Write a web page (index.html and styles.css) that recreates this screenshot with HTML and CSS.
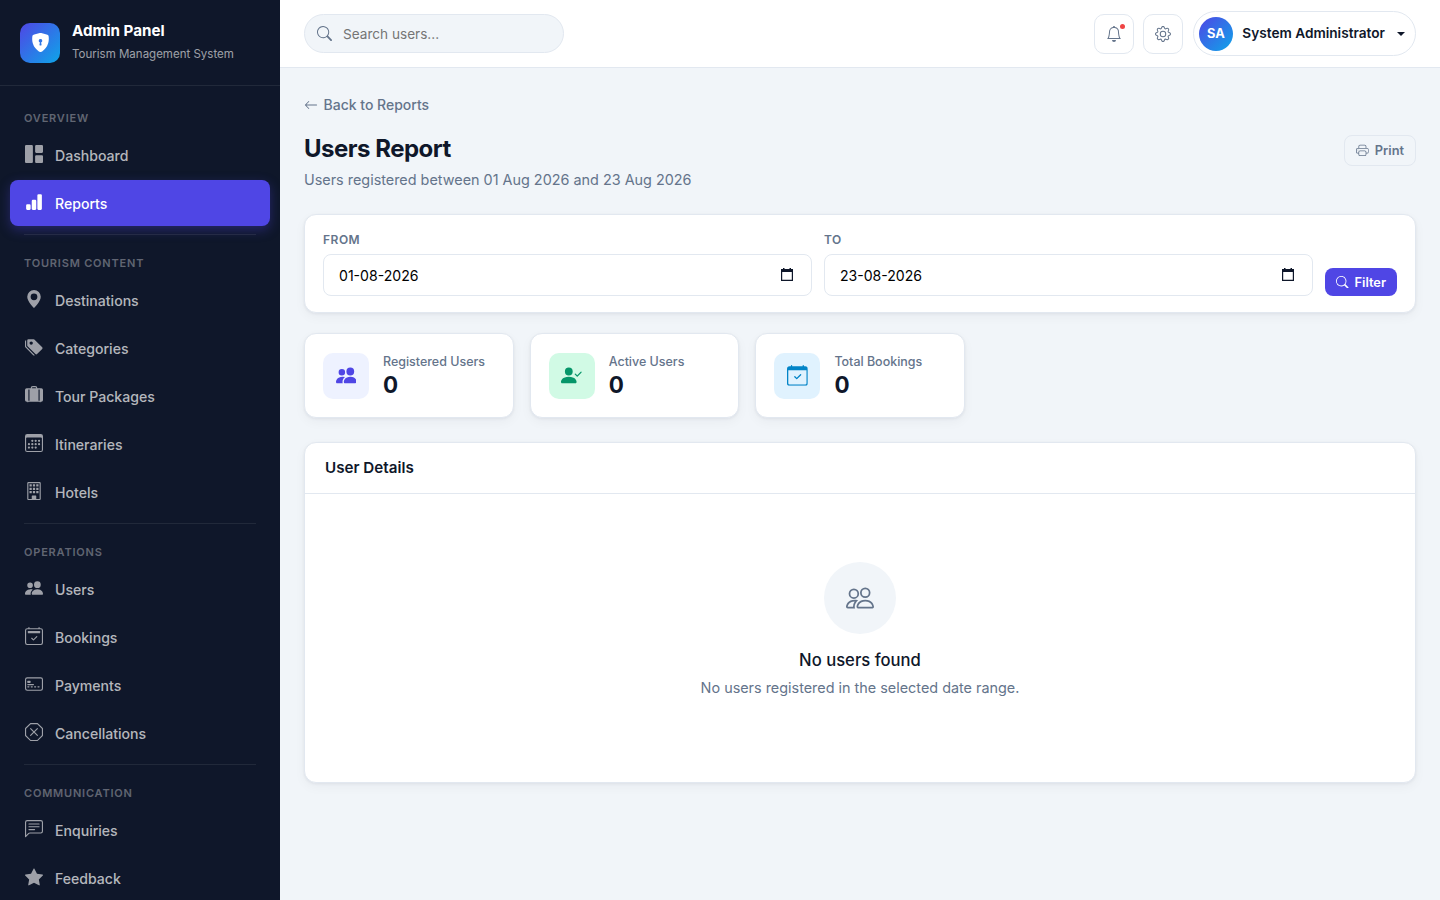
FILE: index.html
```
<!DOCTYPE html>
<html lang="en">
<head>
<meta charset="utf-8">
<title>Users Report</title>
<link rel="stylesheet" href="styles.css">
</head>
<body>

<!-- icon sprite -->
<svg class="sprite" xmlns="http://www.w3.org/2000/svg">
	<symbol id="shield" viewBox="0 0 16 16"><path fill-rule="evenodd" d="M8 0c-.69 0-1.843.265-2.928.56-1.11.3-2.229.655-2.887.87a1.54 1.54 0 0 0-1.044 1.262c-.596 4.477.787 7.795 2.465 9.99a11.8 11.8 0 0 0 2.517 2.453c.386.273.744.482 1.048.625.28.132.581.24.829.24s.548-.108.829-.24a7 7 0 0 0 1.048-.625 11.8 11.8 0 0 0 2.517-2.453c1.678-2.195 3.061-5.513 2.465-9.99a1.54 1.54 0 0 0-1.044-1.263 63 63 0 0 0-2.887-.87C9.843.266 8.69 0 8 0m0 5a1.5 1.5 0 0 1 .5 2.915l.385 1.99a.5.5 0 0 1-.491.595h-.788a.5.5 0 0 1-.49-.595l.384-1.99A1.5 1.5 0 0 1 8 5"/></symbol>
	<symbol id="grid" viewBox="0 0 16 16"><path d="M0 1a1 1 0 0 1 1-1h5a1 1 0 0 1 1 1v14a1 1 0 0 1-1 1H1a1 1 0 0 1-1-1zm9 0a1 1 0 0 1 1-1h5a1 1 0 0 1 1 1v5a1 1 0 0 1-1 1h-5a1 1 0 0 1-1-1zm0 9a1 1 0 0 1 1-1h5a1 1 0 0 1 1 1v5a1 1 0 0 1-1 1h-5a1 1 0 0 1-1-1z"/></symbol>
	<symbol id="chart" viewBox="0 0 16 16"><path d="M1 11a1 1 0 0 1 1-1h2a1 1 0 0 1 1 1v3a1 1 0 0 1-1 1H2a1 1 0 0 1-1-1zm5-4a1 1 0 0 1 1-1h2a1 1 0 0 1 1 1v7a1 1 0 0 1-1 1H7a1 1 0 0 1-1-1zm5-5a1 1 0 0 1 1-1h2a1 1 0 0 1 1 1v12a1 1 0 0 1-1 1h-2a1 1 0 0 1-1-1z"/></symbol>
	<symbol id="geo" viewBox="0 0 16 16"><path d="M8 16s6-5.686 6-10A6 6 0 0 0 2 6c0 4.314 6 10 6 10m0-7a3 3 0 1 1 0-6 3 3 0 0 1 0 6"/></symbol>
	<symbol id="tags" viewBox="0 0 16 16"><path d="M2 2a1 1 0 0 1 1-1h4.586a1 1 0 0 1 .707.293l7 7a1 1 0 0 1 0 1.414l-4.586 4.586a1 1 0 0 1-1.414 0l-7-7A1 1 0 0 1 2 6.586zm3.5 4a1.5 1.5 0 1 0 0-3 1.5 1.5 0 0 0 0 3"/><path d="M1.293 7.793A1 1 0 0 1 1 7.086V2a1 1 0 0 0-1 1v4.586a1 1 0 0 0 .293.707l7 7a1 1 0 0 0 1.414 0l.043-.043z"/></symbol>
	<symbol id="suitcase" viewBox="0 0 16 16"><path d="M7 0a2 2 0 0 0-2 2H1.5A1.5 1.5 0 0 0 0 3.5v9A1.5 1.5 0 0 0 1.5 14H2a.5.5 0 0 0 1 0h10a.5.5 0 0 0 1 0h.5a1.5 1.5 0 0 0 1.5-1.5v-9A1.5 1.5 0 0 0 14.5 2H11a2 2 0 0 0-2-2zM6 2a1 1 0 0 1 1-1h2a1 1 0 0 1 1 1zM3 13V3h1v10zm9 0V3h1v10z"/></symbol>
	<symbol id="calendar3" viewBox="0 0 16 16"><path d="M14 0H2a2 2 0 0 0-2 2v12a2 2 0 0 0 2 2h12a2 2 0 0 0 2-2V2a2 2 0 0 0-2-2M1 3.857C1 3.384 1.448 3 2 3h12c.552 0 1 .384 1 .857v10.286c0 .473-.448.857-1 .857H2c-.552 0-1-.384-1-.857z"/><path d="M6.5 7a1 1 0 1 0 0-2 1 1 0 0 0 0 2m3 0a1 1 0 1 0 0-2 1 1 0 0 0 0 2m3 0a1 1 0 1 0 0-2 1 1 0 0 0 0 2m-9 3a1 1 0 1 0 0-2 1 1 0 0 0 0 2m3 0a1 1 0 1 0 0-2 1 1 0 0 0 0 2m3 0a1 1 0 1 0 0-2 1 1 0 0 0 0 2m3 0a1 1 0 1 0 0-2 1 1 0 0 0 0 2m-9 3a1 1 0 1 0 0-2 1 1 0 0 0 0 2m3 0a1 1 0 1 0 0-2 1 1 0 0 0 0 2m3 0a1 1 0 1 0 0-2 1 1 0 0 0 0 2"/></symbol>
	<symbol id="building" viewBox="0 0 16 16"><path d="M4 2h2v2H4zM7 2h2v2H7zM10 2h2v2h-2zM4 5h2v2H4zM7 5h2v2H7zM10 5h2v2h-2zM4 8h2v2H4zM7 8h2v2H7zM10 8h2v2h-2z"/><path d="M2 1a1 1 0 0 1 1-1h10a1 1 0 0 1 1 1v14a1 1 0 0 1-1 1H3a1 1 0 0 1-1-1zm11 0H3v14h3v-2.5a.5.5 0 0 1 .5-.5h3a.5.5 0 0 1 .5.5V15h3z"/></symbol>
	<symbol id="people-fill" viewBox="0 0 16 16"><path d="M7 14s-1 0-1-1 1-4 5-4 5 3 5 4-1 1-1 1zm4-6a3 3 0 1 0 0-6 3 3 0 0 0 0 6m-5.784 6A2.24 2.24 0 0 1 5 13c0-1.355.68-2.75 1.936-3.72A6.3 6.3 0 0 0 5 9c-4 0-5 3-5 4s1 1 1 1zM4.5 8a2.5 2.5 0 1 0 0-5 2.5 2.5 0 0 0 0 5"/></symbol>
	<symbol id="calendar2" viewBox="0 0 16 16"><path d="M10.854 8.146a.5.5 0 0 1 0 .708l-3 3a.5.5 0 0 1-.708 0l-1.5-1.5a.5.5 0 0 1 .708-.708L7.5 10.793l2.646-2.647a.5.5 0 0 1 .708 0"/><path d="M3.5 0a.5.5 0 0 1 .5.5V1h8V.5a.5.5 0 0 1 1 0V1h1a2 2 0 0 1 2 2v11a2 2 0 0 1-2 2H2a2 2 0 0 1-2-2V3a2 2 0 0 1 2-2h1V.5a.5.5 0 0 1 .5-.5M2 2a1 1 0 0 0-1 1v11a1 1 0 0 0 1 1h12a1 1 0 0 0 1-1V3a1 1 0 0 0-1-1z"/><path d="M2.5 4a.5.5 0 0 1 .5-.5h10a.5.5 0 0 1 .5.5v1a.5.5 0 0 1-.5.5H3a.5.5 0 0 1-.5-.5z"/></symbol>
	<symbol id="card" viewBox="0 0 16 16"><path d="M14 3a1 1 0 0 1 1 1v8a1 1 0 0 1-1 1H2a1 1 0 0 1-1-1V4a1 1 0 0 1 1-1zM2 2a2 2 0 0 0-2 2v8a2 2 0 0 0 2 2h12a2 2 0 0 0 2-2V4a2 2 0 0 0-2-2z"/><path d="M2 5.5a.5.5 0 0 1 .5-.5h2a.5.5 0 0 1 .5.5v1a.5.5 0 0 1-.5.5h-2a.5.5 0 0 1-.5-.5zm0 3a.5.5 0 0 1 .5-.5h5a.5.5 0 0 1 0 1h-5a.5.5 0 0 1-.5-.5m0 2a.5.5 0 0 1 .5-.5h1a.5.5 0 0 1 0 1h-1a.5.5 0 0 1-.5-.5m3 0a.5.5 0 0 1 .5-.5h1a.5.5 0 0 1 0 1h-1a.5.5 0 0 1-.5-.5m3 0a.5.5 0 0 1 .5-.5h1a.5.5 0 0 1 0 1h-1a.5.5 0 0 1-.5-.5m3 0a.5.5 0 0 1 .5-.5h1a.5.5 0 0 1 0 1h-1a.5.5 0 0 1-.5-.5"/></symbol>
	<symbol id="octagon" viewBox="0 0 16 16"><path d="M4.54.146A.5.5 0 0 1 4.893 0h6.214a.5.5 0 0 1 .353.146l4.394 4.394a.5.5 0 0 1 .146.353v6.214a.5.5 0 0 1-.146.353l-4.394 4.394a.5.5 0 0 1-.353.146H4.893a.5.5 0 0 1-.353-.146L.146 11.46A.5.5 0 0 1 0 11.107V4.893a.5.5 0 0 1 .146-.353zM5.1 1 1 5.1v5.8L5.1 15h5.8l4.1-4.1V5.1L10.9 1z"/><path d="M4.646 4.646a.5.5 0 0 1 .708 0L8 7.293l2.646-2.647a.5.5 0 0 1 .708.708L8.707 8l2.647 2.646a.5.5 0 0 1-.708.708L8 8.707l-2.646 2.647a.5.5 0 0 1-.708-.708L7.293 8 4.646 5.354a.5.5 0 0 1 0-.708"/></symbol>
	<symbol id="chat" viewBox="0 0 16 16"><path d="M14 1a1 1 0 0 1 1 1v8a1 1 0 0 1-1 1H4.414A2 2 0 0 0 3 11.586l-2 2V2a1 1 0 0 1 1-1zM2 0a2 2 0 0 0-2 2v12.793a.5.5 0 0 0 .854.353l2.853-2.853A1 1 0 0 1 4.414 12H14a2 2 0 0 0 2-2V2a2 2 0 0 0-2-2z"/><path d="M3 3.5a.5.5 0 0 1 .5-.5h9a.5.5 0 0 1 0 1h-9a.5.5 0 0 1-.5-.5M3 6a.5.5 0 0 1 .5-.5h9a.5.5 0 0 1 0 1h-9A.5.5 0 0 1 3 6m0 2.5a.5.5 0 0 1 .5-.5h5a.5.5 0 0 1 0 1h-5a.5.5 0 0 1-.5-.5"/></symbol>
	<symbol id="star" viewBox="0 0 16 16"><path d="M3.612 15.443c-.386.198-.824-.149-.746-.592l.83-4.73L.173 6.765c-.329-.314-.158-.888.283-.95l4.898-.696L7.538.792c.197-.39.73-.39.927 0l2.184 4.327 4.898.696c.441.062.612.636.282.95l-3.522 3.356.83 4.73c.078.443-.36.79-.746.592L8 13.187l-4.389 2.256z"/></symbol>
	<symbol id="search" viewBox="0 0 16 16"><path d="M11.742 10.344a6.5 6.5 0 1 0-1.397 1.398h-.001q.044.06.098.115l3.85 3.85a1 1 0 0 0 1.415-1.414l-3.85-3.85a1 1 0 0 0-.115-.1zM12 6.5a5.5 5.5 0 1 1-11 0 5.5 5.5 0 0 1 11 0"/></symbol>
	<symbol id="bell" viewBox="0 0 16 16"><path d="M8 16a2 2 0 0 0 2-2H6a2 2 0 0 0 2 2M8 1.918l-.797.161A4 4 0 0 0 4 6c0 .628-.134 2.197-.459 3.742-.16.767-.376 1.566-.663 2.258h10.244c-.287-.692-.502-1.49-.663-2.258C12.134 8.197 12 6.628 12 6a4 4 0 0 0-3.203-3.92zM14.22 12c.223.447.481.801.78 1H1c.299-.199.557-.553.78-1C2.68 10.2 3 6.88 3 6c0-2.42 1.72-4.44 4.005-4.901a1 1 0 1 1 1.99 0A5 5 0 0 1 13 6c0 .88.32 4.2 1.22 6"/></symbol>
	<symbol id="gear" viewBox="0 0 16 16"><path d="M8 4.754a3.246 3.246 0 1 0 0 6.492 3.246 3.246 0 0 0 0-6.492M5.754 8a2.246 2.246 0 1 1 4.492 0 2.246 2.246 0 0 1-4.492 0"/><path d="M9.796 1.343c-.527-1.79-3.065-1.79-3.592 0l-.094.319a.873.873 0 0 1-1.255.52l-.292-.16c-1.64-.892-3.433.902-2.54 2.541l.159.292a.873.873 0 0 1-.52 1.255l-.319.094c-1.79.527-1.79 3.065 0 3.592l.319.094a.873.873 0 0 1 .52 1.255l-.16.292c-.892 1.64.901 3.434 2.541 2.54l.292-.159a.873.873 0 0 1 1.255.52l.094.319c.527 1.79 3.065 1.79 3.592 0l.094-.319a.873.873 0 0 1 1.255-.52l.292.16c1.64.893 3.434-.902 2.54-2.541l-.159-.292a.873.873 0 0 1 .52-1.255l.319-.094c1.79-.527 1.79-3.065 0-3.592l-.319-.094a.873.873 0 0 1-.52-1.255l.16-.292c.893-1.64-.902-3.433-2.541-2.54l-.292.159a.873.873 0 0 1-1.255-.52zm-2.633.283c.246-.835 1.428-.835 1.674 0l.094.319a1.873 1.873 0 0 0 2.693 1.115l.291-.16c.764-.415 1.6.42 1.184 1.185l-.159.292a1.873 1.873 0 0 0 1.116 2.692l.318.094c.835.246.835 1.428 0 1.674l-.319.094a1.873 1.873 0 0 0-1.115 2.693l.16.291c.415.764-.42 1.6-1.185 1.184l-.291-.159a1.873 1.873 0 0 0-2.693 1.116l-.094.318c-.246.835-1.428.835-1.674 0l-.094-.319a1.873 1.873 0 0 0-2.692-1.115l-.292.16c-.764.415-1.6-.42-1.184-1.185l.159-.291A1.873 1.873 0 0 0 1.945 8.93l-.319-.094c-.835-.246-.835-1.428 0-1.674l.319-.094A1.873 1.873 0 0 0 3.06 4.377l-.16-.292c-.415-.764.42-1.6 1.185-1.184l.292.159a1.873 1.873 0 0 0 2.692-1.115z"/></symbol>
	<symbol id="arrow" viewBox="0 0 16 16"><path d="M15 8a.5.5 0 0 0-.5-.5H2.707l3.147-3.146a.5.5 0 1 0-.708-.708l-4 4a.5.5 0 0 0 0 .708l4 4a.5.5 0 0 0 .708-.708L2.707 8.5H14.5A.5.5 0 0 0 15 8"/></symbol>
	<symbol id="printer" viewBox="0 0 16 16"><path d="M2.5 8a.5.5 0 1 0 0-1 .5.5 0 0 0 0 1"/><path d="M5 1a2 2 0 0 0-2 2v2H2a2 2 0 0 0-2 2v3a2 2 0 0 0 2 2h1v1a2 2 0 0 0 2 2h6a2 2 0 0 0 2-2v-1h1a2 2 0 0 0 2-2V7a2 2 0 0 0-2-2h-1V3a2 2 0 0 0-2-2zM4 3a1 1 0 0 1 1-1h6a1 1 0 0 1 1 1v2H4zm1 5a2 2 0 0 0-2 2v1H2a1 1 0 0 1-1-1V7a1 1 0 0 1 1-1h12a1 1 0 0 1 1 1v3a1 1 0 0 1-1 1h-1v-1a2 2 0 0 0-2-2zm7 2v3a1 1 0 0 1-1 1H5a1 1 0 0 1-1-1v-3a1 1 0 0 1 1-1h6a1 1 0 0 1 1 1"/></symbol>
	<symbol id="people" viewBox="0 0 16 16"><path d="M15 14s1 0 1-1-1-4-5-4-5 3-5 4 1 1 1 1zm-7.978-1L7 12.996c.001-.264.167-1.03.76-1.72C8.312 10.629 9.282 10 11 10c1.717 0 2.687.63 3.24 1.276.593.69.758 1.457.76 1.72l-.008.002-.014.002zM11 7a2 2 0 1 0 0-4 2 2 0 0 0 0 4m3-2a3 3 0 1 1-6 0 3 3 0 0 1 6 0M6.936 9.28a6 6 0 0 0-1.23-.247A7 7 0 0 0 5 9c-4 0-5 3-5 4q0 1 1 1h4.216A2.24 2.24 0 0 1 5 13c0-1.01.377-2.042 1.09-2.904.243-.294.526-.569.846-.816M4.92 10A5.5 5.5 0 0 0 4 13H1c0-.26.164-1.03.76-1.724.545-.636 1.492-1.256 3.16-1.275zM1.5 5.5a3 3 0 1 1 6 0 3 3 0 0 1-6 0m3-2a2 2 0 1 0 0 4 2 2 0 0 0 0-4"/></symbol>
	<symbol id="person-check" viewBox="0 0 16 16"><path d="M15.854 5.146a.5.5 0 0 1 0 .708l-3 3a.5.5 0 0 1-.708 0l-1.5-1.5a.5.5 0 0 1 .708-.708L12.5 7.793l2.646-2.647a.5.5 0 0 1 .708 0"/><path d="M1 14s-1 0-1-1 1-4 6-4 6 3 6 4-1 1-1 1zm5-6a3 3 0 1 0 0-6 3 3 0 0 0 0 6"/></symbol>
	<symbol id="calendar-check" viewBox="0 0 16 16"><path d="M10.854 7.146a.5.5 0 0 1 0 .708l-3 3a.5.5 0 0 1-.708 0l-1.5-1.5a.5.5 0 1 1 .708-.708L7.5 9.793l2.646-2.647a.5.5 0 0 1 .708 0"/><path d="M3.5 0a.5.5 0 0 1 .5.5V1h8V.5a.5.5 0 0 1 1 0V1h1a2 2 0 0 1 2 2v11a2 2 0 0 1-2 2H2a2 2 0 0 1-2-2V3a2 2 0 0 1 2-2h1V.5a.5.5 0 0 1 .5-.5M1 4v10a1 1 0 0 0 1 1h12a1 1 0 0 0 1-1V4z"/></symbol>
	<symbol id="picker" viewBox="0 0 12 13"><path fill-rule="evenodd" d="M2 0h1.5v1h5V0H10v1h2v12H0V1h2zM1.2 4v7.8h9.6V4z"/></symbol>
</svg>

<aside class="sidebar">
	<div class="brand">
		<div class="brand-icon"><svg class="icon"><use href="#shield"/></svg></div>
		<div class="brand-text">
			<div class="brand-name">Admin Panel</div>
			<div class="brand-sub">Tourism Management System</div>
		</div>
	</div>
	<nav class="menu">
		<div class="menu-title">Overview</div>
		<a class="menu-link"><svg class="icon"><use href="#grid"/></svg>Dashboard</a>
		<a class="menu-link active"><svg class="icon"><use href="#chart"/></svg>Reports</a>
		<hr class="menu-divider">
		<div class="menu-title">Tourism Content</div>
		<a class="menu-link"><svg class="icon"><use href="#geo"/></svg>Destinations</a>
		<a class="menu-link"><svg class="icon"><use href="#tags"/></svg>Categories</a>
		<a class="menu-link"><svg class="icon"><use href="#suitcase"/></svg>Tour Packages</a>
		<a class="menu-link"><svg class="icon"><use href="#calendar3"/></svg>Itineraries</a>
		<a class="menu-link"><svg class="icon"><use href="#building"/></svg>Hotels</a>
		<hr class="menu-divider">
		<div class="menu-title">Operations</div>
		<a class="menu-link"><svg class="icon"><use href="#people-fill"/></svg>Users</a>
		<a class="menu-link"><svg class="icon"><use href="#calendar2"/></svg>Bookings</a>
		<a class="menu-link"><svg class="icon"><use href="#card"/></svg>Payments</a>
		<a class="menu-link"><svg class="icon"><use href="#octagon"/></svg>Cancellations</a>
		<hr class="menu-divider">
		<div class="menu-title">Communication</div>
		<a class="menu-link"><svg class="icon"><use href="#chat"/></svg>Enquiries</a>
		<a class="menu-link"><svg class="icon"><use href="#star"/></svg>Feedback</a>
	</nav>
</aside>

<div class="main">
	<header class="topbar">
		<label class="search">
			<svg class="icon"><use href="#search"/></svg>
			<input type="text" placeholder="Search users...">
		</label>
		<div class="topbar-right">
			<button class="icon-btn"><svg class="icon"><use href="#bell"/></svg><span class="dot"></span></button>
			<button class="icon-btn"><svg class="icon"><use href="#gear"/></svg></button>
			<button class="profile">
				<span class="avatar">SA</span>
				<span class="profile-name">System Administrator</span>
				<span class="caret"></span>
			</button>
		</div>
	</header>

	<main class="content">
		<a class="back"><svg class="icon"><use href="#arrow"/></svg>Back to Reports</a>
		<div class="page-head">
			<div>
				<h1>Users Report</h1>
				<p>Users registered between 01 Aug 2026 and 23 Aug 2026</p>
			</div>
			<button class="btn btn-light"><svg class="icon"><use href="#printer"/></svg>Print</button>
		</div>

		<form class="card filter">
			<div class="field">
				<label for="from">From</label>
				<div class="date"><input id="from" type="text" value="01-08-2026"><svg class="icon"><use href="#picker"/></svg></div>
			</div>
			<div class="field">
				<label for="to">To</label>
				<div class="date"><input id="to" type="text" value="23-08-2026"><svg class="icon"><use href="#picker"/></svg></div>
			</div>
			<button type="button" class="btn btn-primary"><svg class="icon"><use href="#search"/></svg>Filter</button>
		</form>

		<div class="stats">
			<div class="card stat">
				<div class="stat-icon indigo"><svg class="icon"><use href="#people-fill"/></svg></div>
				<div>
					<div class="stat-label">Registered Users</div>
					<div class="stat-value">0</div>
				</div>
			</div>
			<div class="card stat">
				<div class="stat-icon green"><svg class="icon"><use href="#person-check"/></svg></div>
				<div>
					<div class="stat-label">Active Users</div>
					<div class="stat-value">0</div>
				</div>
			</div>
			<div class="card stat">
				<div class="stat-icon sky"><svg class="icon"><use href="#calendar-check"/></svg></div>
				<div>
					<div class="stat-label">Total Bookings</div>
					<div class="stat-value">0</div>
				</div>
			</div>
		</div>

		<section class="card details">
			<h2>User Details</h2>
			<div class="empty">
				<div class="empty-icon"><svg class="icon"><use href="#people"/></svg></div>
				<h3>No users found</h3>
				<p>No users registered in the selected date range.</p>
			</div>
		</section>
	</main>
</div>
</body>
</html>
```
FILE: styles.css
```
* {
	box-sizing: border-box;
}

body {
	margin: 0;
	display: flex;
	height: 100vh;
	overflow: hidden;
	font-family: Inter, sans-serif;
	font-size: 16px;
	line-height: 1.5;
	color: #0f172a;
	background: #f1f5f9;
}

h1, h2, h3, p {
	margin: 0;
}

button, input {
	font-family: inherit;
}

.sprite {
	display: none;
}

.icon {
	display: block;
	flex: none;
	width: 1em;
	height: 1em;
	fill: currentColor;
}

/* Sidebar */
.sidebar {
	flex: none;
	width: 280px;
	overflow: hidden;
	background: #0f172a;
}

.brand {
	display: flex;
	align-items: center;
	gap: 12px;
	height: 86px;
	padding: 0 20px;
	border-bottom: 1px solid rgba(255, 255, 255, .08);
}

.brand-icon {
	display: flex;
	align-items: center;
	justify-content: center;
	width: 40px;
	height: 40px;
	border-radius: 10px;
	font-size: 19px;
	color: #fff;
	background: linear-gradient(135deg, #4f46e5, #0ea5e9);
}

.brand-text {
	padding-bottom: 3px;
}

.brand-name {
	font-size: 15.2px;
	font-weight: 700;
	line-height: 23px;
	color: #fff;
}

.brand-sub {
	font-size: 11.52px;
	line-height: 18px;
	margin-top: 3px;
	color: rgba(255, 255, 255, .6);
}

.menu {
	padding: 4px 10px;
}

.menu-title {
	padding: 20.1px 14px 5.2px;
	font-size: 11px;
	font-weight: 600;
	line-height: 16.6px;
	letter-spacing: .8px;
	text-transform: uppercase;
	color: rgba(255, 255, 255, .35);
}

.menu-title:first-child {
	padding: 20.4px 14px 5px;
}

.menu-link {
	display: flex;
	align-items: center;
	gap: 12px;
	height: 46px;
	margin-bottom: 2px;
	padding: 2px 15px 0;
	border-radius: 8px;
	font-size: 14.08px;
	font-weight: 500;
	color: rgba(255, 255, 255, .7);
}

.menu-link .icon {
	width: 18px;
	height: 18px;
	margin-top: -3px;
	opacity: .85;
}

.menu-link.active {
	color: #fff;
	background: #4f46e5;
	box-shadow: 0 4px 12px rgba(79, 70, 229, .35);
}

.menu-link.active .icon {
	opacity: 1;
}

.menu-divider {
	height: 1px;
	margin: 8px 14px 0;
	border: 0;
	background: rgba(255, 255, 255, .08);
}

/* Topbar */
.main {
	flex: 1;
	min-width: 0;
}

.topbar {
	display: flex;
	align-items: center;
	justify-content: space-between;
	height: 68px;
	padding: 0 24px;
	background: #fff;
	border-bottom: 1px solid #e2e8f0;
}

.search {
	display: flex;
	align-items: center;
	gap: 11px;
	width: 260px;
	height: 39px;
	padding: 0 12px;
	border: 1px solid #e2e8f0;
	border-radius: 20px;
	font-size: 15px;
	color: #64748b;
	background: #f1f5f9;
}

.search input {
	flex: 1;
	min-width: 0;
	padding: 0;
	border: 0;
	outline: 0;
	font-size: 13.6px;
	background: none;
}

.topbar-right {
	display: flex;
	align-items: center;
	gap: 9.6px;
}

.icon-btn {
	position: relative;
	display: flex;
	align-items: center;
	justify-content: center;
	width: 40px;
	height: 40px;
	padding: 0;
	border: 1px solid #e2e8f0;
	border-radius: 10px;
	font-size: 16px;
	color: #64748b;
	background: #fff;
}

.dot {
	position: absolute;
	top: 9px;
	right: 8px;
	width: 5px;
	height: 5px;
	border-radius: 50%;
	background: #ef4444;
}

.profile {
	display: flex;
	align-items: center;
	height: 45px;
	padding: 0 10px 0 5px;
	border: 1px solid #e2e8f0;
	border-radius: 23px;
	color: #0f172a;
	background: #fff;
}

.avatar {
	width: 34px;
	height: 34px;
	border-radius: 50%;
	font-size: 12.8px;
	font-weight: 700;
	line-height: 34px;
	color: #fff;
	background: linear-gradient(135deg, #4f46e5, #0ea5e9);
}

.profile-name {
	margin: 0 12px 0 9.4px;
	padding-bottom: 1px;
	font-size: 13.65px;
	font-weight: 600;
}

.caret {
	border-top: 4px solid;
	border-right: 4px solid transparent;
	border-left: 4px solid transparent;
}

/* Content */
.content {
	padding: 26px 24px;
}

.back {
	display: flex;
	align-items: center;
	gap: 5.5px;
	font-size: 14px;
	font-weight: 500;
	line-height: 22px;
	color: #64748b;
}

.page-head {
	display: flex;
	align-items: flex-start;
	justify-content: space-between;
	margin: 14px 0 23px;
}

.page-head h1 {
	font-size: 24px;
	font-weight: 700;
	line-height: 38px;
	letter-spacing: -.5px;
}

.page-head p {
	margin-top: 1px;
	font-size: 14.4px;
	line-height: 22px;
	color: #64748b;
}

.btn {
	display: flex;
	align-items: center;
	gap: 6px;
	border: 0;
	border-radius: 8px;
	font-size: 12.8px;
	font-weight: 600;
}

.btn-light {
	height: 31px;
	margin-top: 5px;
	padding: 0 11px;
	border: 1px solid #e2e8f0;
	color: #64748b;
	background: transparent;
}

.btn-primary {
	height: 28px;
	padding: 0 11px;
	color: #fff;
	background: #4f46e5;
}

.card {
	background: #fff;
	border: 1px solid #e2e8f0;
	border-radius: 12px;
	box-shadow: 0 1px 3px rgba(15, 23, 42, .06), 0 4px 12px rgba(15, 23, 42, .04);
}

.filter {
	display: flex;
	align-items: flex-end;
	gap: 12px;
	height: 99px;
	padding: 16px 18px;
}

.field {
	flex: 1;
}

.field label {
	display: block;
	margin-bottom: 5px;
	font-size: 12px;
	font-weight: 600;
	line-height: 18px;
	letter-spacing: .5px;
	text-transform: uppercase;
	color: #64748b;
}

.date {
	display: flex;
	align-items: center;
	height: 42px;
	padding: 0 18px 0 15px;
	border: 1px solid #e2e8f0;
	border-radius: 8px;
}

.date input {
	flex: 1;
	min-width: 0;
	padding: 0;
	border: 0;
	outline: 0;
	font-size: 14.08px;
	color: #000;
	background: none;
}

.date .icon {
	width: 12px;
	height: 13px;
	margin-top: -2px;
}

.stats {
	display: grid;
	grid-template-columns: repeat(3, 209.7px);
	gap: 16px;
	margin: 20px 0 24px;
}

.stat {
	display: flex;
	align-items: center;
	gap: 14px;
	height: 85px;
	padding: 0 18px;
}

.stat-icon {
	display: flex;
	align-items: center;
	justify-content: center;
	width: 46px;
	height: 46px;
	border-radius: 10px;
	font-size: 20.8px;
}

.indigo {
	color: #4f46e5;
	background: #eef2ff;
}

.green {
	color: #059669;
	background: #d1fae5;
}

.sky {
	color: #0284c7;
	background: #e0f2fe;
}

.stat-label {
	font-size: 12.48px;
	font-weight: 500;
	line-height: 19px;
	color: #64748b;
}

.stat-value {
	padding-bottom: 1px;
	font-size: 22.4px;
	font-weight: 700;
	line-height: 27px;
}

.details h2 {
	padding: 0 20px;
	border-bottom: 1px solid #e2e8f0;
	font-size: 15.2px;
	font-weight: 600;
	line-height: 50px;
}

.empty {
	display: flex;
	flex-direction: column;
	align-items: center;
	height: 288px;
	padding-top: 68px;
}

.empty-icon {
	display: flex;
	align-items: center;
	justify-content: center;
	width: 72px;
	height: 72px;
	border-radius: 50%;
	font-size: 28px;
	color: #64748b;
	background: #f1f5f9;
}

.empty h3 {
	margin: 14px 0 5px;
	font-size: 16.64px;
	font-weight: 500;
	line-height: 24px;
}

.empty p {
	font-size: 14.4px;
	line-height: 22px;
	color: #64748b;
}
```
